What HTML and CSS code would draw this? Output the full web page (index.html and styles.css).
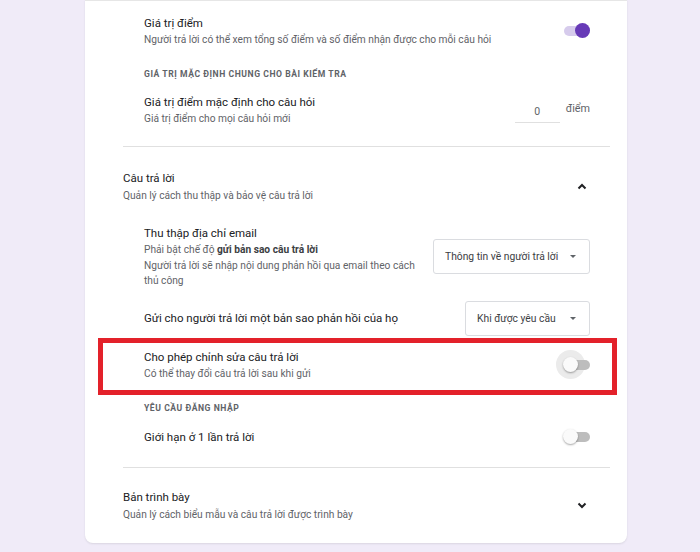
FILE: index.html
```html
<!DOCTYPE html>
<html lang="vi">
<head>
<meta charset="utf-8">
<title>Cài đặt</title>
<link rel="stylesheet" href="styles.css">
</head>
<body>
<div class="page">
  <div class="card">
    <div class="section">
      <div class="sub-items first">
        <div class="row r-points">
          <div class="texts">
            <div class="title">Giá trị điểm</div>
            <div class="desc">Người trả lời có thể xem tổng số điểm và số điểm nhận được cho mỗi câu hỏi</div>
          </div>
          <div class="switch on"><span class="track"></span><span class="knob"></span></div>
        </div>
        <div class="caps h-quiz">GIÁ TRỊ MẶC ĐỊNH CHUNG CHO BÀI KIỂM TRA</div>
        <div class="row r-default">
          <div class="texts">
            <div class="title">Giá trị điểm mặc định cho câu hỏi</div>
            <div class="desc">Giá trị điểm cho mọi câu hỏi mới</div>
          </div>
          <div class="points">
            <span class="num-input">0</span>
            <span class="unit">điểm</span>
          </div>
        </div>
      </div>
    </div>

    <div class="divider"></div>

    <div class="section">
      <div class="sec-head">
        <div class="texts">
          <div class="title">Câu trả lời</div>
          <div class="desc">Quản lý cách thu thập và bảo vệ câu trả lời</div>
        </div>
        <svg class="chev" width="10" height="7" viewBox="0 0 10 7"><polyline points="1.5,5.5 5,2 8.5,5.5" fill="none" stroke="#202124" stroke-width="2"/></svg>
      </div>
      <div class="sub-items">
        <div class="row r-email">
          <div class="texts narrow">
            <div class="title">Thu thập địa chỉ email</div>
            <div class="desc multi">Phải bật chế độ <b>gửi bản sao câu trả lời</b><br>Người trả lời sẽ nhập nội dung phản hồi qua email theo cách thủ công</div>
          </div>
          <div class="select s-wide"><span>Thông tin về người trả lời</span><span class="caret"></span></div>
        </div>
        <div class="row r-copy">
          <div class="texts">
            <div class="title">Gửi cho người trả lời một bản sao phản hồi của họ</div>
          </div>
          <div class="select s-short"><span>Khi được yêu cầu</span><span class="caret"></span></div>
        </div>
        <div class="row r-edit">
          <div class="texts">
            <div class="title">Cho phép chỉnh sửa câu trả lời</div>
            <div class="desc">Có thể thay đổi câu trả lời sau khi gửi</div>
          </div>
          <div class="switch off focus"><span class="halo"></span><span class="track"></span><span class="knob"></span></div>
        </div>
        <div class="caps h-login">YÊU CẦU ĐĂNG NHẬP</div>
        <div class="row r-limit">
          <div class="texts">
            <div class="title">Giới hạn ở 1 lần trả lời</div>
          </div>
          <div class="switch off"><span class="track"></span><span class="knob"></span></div>
        </div>
      </div>
    </div>

    <div class="divider d2"></div>

    <div class="section">
      <div class="sec-head last">
        <div class="texts">
          <div class="title">Bản trình bày</div>
          <div class="desc">Quản lý cách biểu mẫu và câu trả lời được trình bày</div>
        </div>
        <svg class="chev" width="10" height="7" viewBox="0 0 10 7"><polyline points="1.5,1.5 5,5 8.5,1.5" fill="none" stroke="#202124" stroke-width="2"/></svg>
      </div>
    </div>
  </div>
</div>
</body>
</html>
```

FILE: styles.css
```css
* { box-sizing: border-box; }
html, body { margin: 0; padding: 0; }
body {
  background: #f0ebf8;
  font-family: Roboto, "Noto Sans", Arial, sans-serif;
  color: #202124;
  width: 700px;
  height: 552px;
  overflow: hidden;
}
.page { padding-left: 85px; }
.card {
  width: 542px;
  background: #fff;
  border-radius: 0 0 8px 8px;
  border-top: 1px solid #e6e6e6;
  box-shadow: 0 1px 2px rgba(60, 64, 67, 0.12);
  padding: 0 17px 20px 38px;
}
.title { font-size: 11.5px; line-height: 18px; color: #202124; }
.desc { font-size: 10.2px; line-height: 16px; color: #5f6368; }
.sec-head .desc { line-height: 17px; }
.desc.multi { line-height: 15.5px; }
.desc b { font-weight: 700; color: #3c4043; }
.caps {
  font-size: 8.6px;
  line-height: 14px;
  font-weight: 700;
  letter-spacing: 0.55px;
  color: #5f6368;
}
.sub-items { padding-left: 21px; padding-right: 20px; }
.sub-items.first { padding-top: 13px; }
.row { display: flex; align-items: center; justify-content: space-between; }
.texts { flex: 1; min-width: 0; }
.texts.narrow { max-width: 282px; }

.h-quiz { margin-top: 19px; }
.r-default { margin-top: 12px; align-items: flex-start; }
.divider { height: 1px; background: #e0e0e0; margin-top: 19px; }
.d2 { margin-top: 21px; }

.sec-head {
  display: flex; align-items: center; justify-content: space-between;
  padding: 22px 23px 0 0;
}
.sec-head.last { padding-top: 20px; }
.chev { display: block; }
.r-email { margin-top: 20px; }
.r-copy { margin-top: 12px; }
.r-edit {
  margin: 2px -27px 0 -46px;
  border: 5px solid #e3212a;
  padding: 5px 22px 8px 41px;
}
.h-login { margin-top: 6px; }
.r-limit { margin-top: 13px; }

/* points input */
.points { display: flex; align-items: flex-start; gap: 6px; padding-top: 8px; }
.num-input {
  display: block;
  width: 45px;
  text-align: center;
  font-size: 10.5px;
  line-height: 14px;
  color: #5f6368;
  padding-top: 4px;
  padding-bottom: 3px;
  border-bottom: 1px solid #e0e0e0;
}
.unit { font-size: 10.8px; line-height: 16px; color: #5f6368; }

/* select */
.select {
  display: flex; align-items: center; justify-content: space-between;
  height: 35px;
  border: 1px solid #dadce0;
  border-radius: 3px;
  padding: 0 13px 0 11px;
  font-size: 10.3px;
  color: #3c4043;
  flex: none;
}
.s-wide { width: 157px; }
.s-short { width: 125px; }
.caret {
  width: 0; height: 0;
  border-left: 3.5px solid transparent;
  border-right: 3.5px solid transparent;
  border-top: 3.5px solid #5f6368;
  margin-left: 8px;
}

/* switch */
.switch { position: relative; width: 27px; height: 16px; flex: none; }
.switch .track {
  position: absolute; left: 1px; right: 0; top: 3px; height: 10px;
  border-radius: 5px; background: #bdbdbd;
}
.switch.on .track { background: #d6cbec; }
.switch .knob {
  position: absolute; top: 0; width: 15px; height: 15px; border-radius: 50%;
}
.switch.on .knob { right: 0; background: #673ab7; }
.switch.off .knob {
  left: 0; background: #fafafa;
  box-shadow: 0 1px 2px rgba(0,0,0,0.35);
}
.switch .halo {
  position: absolute; left: -7px; top: -7px; width: 29px; height: 29px;
  border-radius: 50%; background: #ebebeb;
}
```
